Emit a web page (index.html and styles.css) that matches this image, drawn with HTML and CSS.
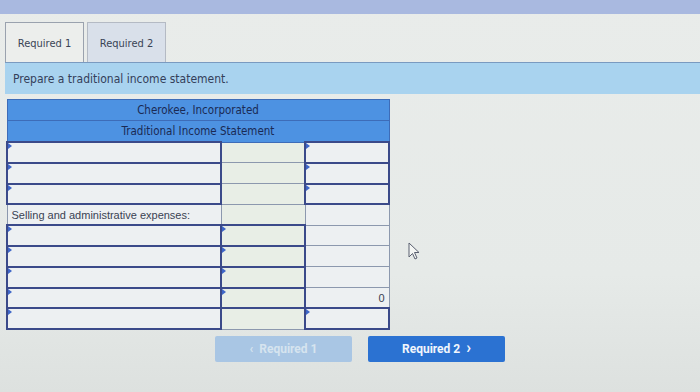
FILE: index.html
```html
<!DOCTYPE html>
<html>
<head>
<meta charset="utf-8">
<link rel="stylesheet" href="styles.css">
</head>
<body>
<div class="topbar"></div>
<div class="main">
  <div class="tabs">
    <div class="tab active">Required 1</div>
    <div class="tab">Required 2</div>
  </div>
  <div class="instr">Prepare a traditional income statement.</div>
  <table class="stmt">
    <colgroup><col class="w1"><col class="w2"><col class="w3"></colgroup>
    <tr class="hdr"><th colspan="3">Cherokee, Incorporated</th></tr>
    <tr class="hdr"><th colspan="3">Traditional Income Statement</th></tr>
    <tr><td class="c1 in"><i class="mk"></i></td><td class="c2"></td><td class="c3 in"><i class="mk"></i></td></tr>
    <tr><td class="c1 in"><i class="mk"></i></td><td class="c2"></td><td class="c3 in"><i class="mk"></i></td></tr>
    <tr><td class="c1 in"><i class="mk"></i></td><td class="c2"></td><td class="c3 in"><i class="mk"></i></td></tr>
    <tr><td class="c1 lbl">Selling and administrative expenses:</td><td class="c2"></td><td class="c3"></td></tr>
    <tr><td class="c1 in"><i class="mk"></i></td><td class="c2 in"><i class="mk"></i></td><td class="c3"></td></tr>
    <tr><td class="c1 in"><i class="mk"></i></td><td class="c2 in"><i class="mk"></i></td><td class="c3"></td></tr>
    <tr><td class="c1 in"><i class="mk"></i></td><td class="c2 in"><i class="mk"></i></td><td class="c3"></td></tr>
    <tr><td class="c1 in"><i class="mk"></i></td><td class="c2 in"><i class="mk"></i></td><td class="c3 num">0</td></tr>
    <tr><td class="c1 in"><i class="mk"></i></td><td class="c2"></td><td class="c3 in"><i class="mk"></i></td></tr>
  </table>
  <div class="nav">
    <button class="btn prev">&lsaquo;&nbsp;&nbsp;Required 1</button>
    <button class="btn next">Required 2&nbsp;&nbsp;<span class="chev">&rsaquo;</span></button>
  </div>
</div>
<svg class="cursor" width="14" height="20" viewBox="0 0 14 20"><path d="M1 1 L1 15 L4.5 11.5 L7 17 L9 16 L6.5 10.5 L11 10.5 Z" fill="#f4f6f4" stroke="#5a6070" stroke-width="1"/></svg>
</body>
</html>
```
FILE: styles.css
```css
html, body {
  margin: 0;
  padding: 0;
}
body {
  width: 700px;
  height: 392px;
  overflow: hidden;
  background: linear-gradient(#e9ecea 0, #e6eae8 70%, #dde1df 100%);
  font-family: "Liberation Sans", Arial, sans-serif;
  position: relative;
}
.topbar {
  height: 14px;
  background: #a9b9e0;
}
.main {
  padding: 8px 0 0 5px;
}
.tabs {
  display: flex;
  gap: 3px;
  height: 40px;
}
.tab {
  width: 79px;
  box-sizing: border-box;
  border: 1px solid #b4bac4;
  border-bottom: none;
  background: #d9e0ea;
  font-family: "DejaVu Sans Condensed", "DejaVu Sans", sans-serif;
  font-size: 11px;
  color: #3a4456;
  display: flex;
  align-items: center;
  justify-content: center;
  padding-top: 1px;
}
.tab.active {
  background: #eceeec;
  border-color: #9aa2ae;
}
.instr {
  height: 32px;
  box-sizing: border-box;
  border-top: 1px solid #7a9ac0;
  background: #a9d3ef;
  font-family: "DejaVu Sans Condensed", "DejaVu Sans", sans-serif;
  font-size: 12px;
  color: #34405a;
  padding: 9px 0 0 8px;
}
.stmt {
  margin: 5px 0 0 1px;
  border-collapse: collapse;
  table-layout: fixed;
  width: 382px;
}
col.w1 { width: 214px; }
col.w2 { width: 84px; }
col.w3 { width: 84px; }
.hdr th {
  background: #4d92e2;
  color: #1a2a54;
  font-family: "DejaVu Sans Condensed", "DejaVu Sans", sans-serif;
  font-weight: normal;
  font-size: 11.5px;
  height: 20px;
  padding: 0;
  border: 1px solid #3d6cb8;
}
td {
  height: 18.8px;
  padding: 0;
  border: 1px solid #8c98ae;
  background: #edf0f2;
  position: relative;
  font-size: 11px;
  color: #3a4252;
  white-space: nowrap;
}
td.c2 { background: #e8eee6; }
td.in {
  border: 2px solid #3b4a8a;
}
td.lbl {
  padding-left: 4px;
}
td.num {
  text-align: right;
  padding-right: 4px;
}
.mk {
  position: absolute;
  left: 0;
  top: 0;
  width: 0;
  height: 0;
  border-top: 3px solid transparent;
  border-bottom: 3px solid transparent;
  border-left: 4px solid #3e66c8;
}
.nav {
  display: flex;
  gap: 16px;
  margin: 6px 0 0 210px;
}
.btn {
  width: 137px;
  height: 26px;
  border: none;
  border-radius: 2px;
  font-family: Roboto, "Liberation Sans", sans-serif;
  font-weight: bold;
  font-size: 12px;
  display: flex;
  align-items: center;
  justify-content: center;
}
.btn.prev {
  background: #a9c6e4;
  color: #d6e4ef;
}
.btn.next {
  background: #2b72d2;
  color: #f2f6fc;
}
.chev {
  font-size: 16px;
  line-height: 1;
  margin-top: -2px;
}
.cursor {
  position: absolute;
  left: 408px;
  top: 242px;
}
```
